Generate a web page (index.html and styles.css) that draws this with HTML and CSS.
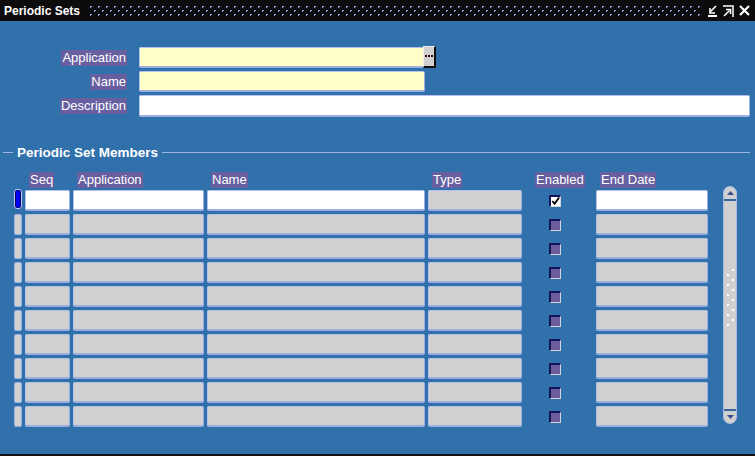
FILE: index.html
```html
<!DOCTYPE html>
<html lang="en">
<head>
  <title>Periodic Sets</title>
  <link rel="stylesheet" href="styles.css">
</head>
<body>
  <div class="window">
    <div class="titlebar">
      <span class="title">Periodic Sets</span>
      <svg class="grip" height="10">
        <defs>
          <pattern id="dots" width="8" height="8" patternUnits="userSpaceOnUse">
            <rect x="0" y="0" width="2" height="1" fill="#8ca2e8"/>
            <rect x="0" y="0" width="1" height="2" fill="#8ca2e8"/>
            <rect x="4" y="4" width="2" height="1" fill="#8ca2e8"/>
            <rect x="4" y="4" width="1" height="2" fill="#8ca2e8"/>
          </pattern>
        </defs>
        <rect width="100%" height="10" fill="url(#dots)"/>
      </svg>
      <div class="controls">
        <svg width="10" height="12" viewBox="0 0 10 12">
          <path d="M8 1 L2.5 6.5" stroke="#fff" stroke-width="1.6" fill="none"/>
          <path d="M2 3 V8 H7" stroke="#fff" stroke-width="1.6" fill="none"/>
          <rect x="0" y="10" width="9" height="2" fill="#fff"/>
        </svg>
        <svg width="11" height="12" viewBox="0 0 11 12">
          <path d="M0 1 H10 V12" stroke="#fff" stroke-width="1.5" fill="none"/>
          <path d="M1 11 L6.5 5.5" stroke="#fff" stroke-width="1.6" fill="none"/>
          <path d="M3 4.5 H7.5 V9" stroke="#fff" stroke-width="1.6" fill="none"/>
        </svg>
        <svg width="11" height="11" viewBox="0 0 11 11">
          <path d="M1 1 L10 10 M10 1 L1 10" stroke="#fff" stroke-width="2.2" fill="none"/>
        </svg>
      </div>
    </div>

    <div class="content">
      <div class="form">
        <div class="lbl"><span>Application</span></div>
        <div class="field-line">
          <div class="fld yellow app"></div>
          <div class="lov">
            <svg width="8" height="2" viewBox="0 0 8 2">
              <rect x="0" y="0" width="2" height="2" fill="#3a0000"/>
              <rect x="3" y="0" width="2" height="2" fill="#3a0000"/>
              <rect x="6" y="0" width="2" height="2" fill="#3a0000"/>
            </svg>
          </div>
        </div>
        <div class="lbl"><span>Name</span></div>
        <div class="field-line">
          <div class="fld yellow name"></div>
        </div>
        <div class="lbl"><span>Description</span></div>
        <div class="field-line">
          <div class="fld white desc"></div>
        </div>
      </div>

      <div class="legend">
        <span class="rule short"></span>
        <span class="legend-text">Periodic Set Members</span>
        <span class="rule"></span>
      </div>

      <div class="members">
        <div class="table">
          <div class="row head">
            <div></div>
            <div class="hd"><span>Seq</span></div>
            <div class="hd"><span>Application</span></div>
            <div class="hd"><span>Name</span></div>
            <div class="hd"><span>Type</span></div>
            <div class="hd en"><span>Enabled</span></div>
            <div class="hd"><span>End Date</span></div>
          </div>

          <div class="row">
            <div class="ind cur"></div>
            <div class="fld white"></div>
            <div class="fld white"></div>
            <div class="fld white"></div>
            <div class="fld"></div>
            <div class="cb-cell">
              <div class="cb checked">
                <svg width="10" height="10" viewBox="0 0 10 10">
                  <path d="M1.5 5 L4 8 L9 1" stroke="#000" stroke-width="2" fill="none"/>
                </svg>
              </div>
            </div>
            <div class="fld white"></div>
          </div>

          <div class="row">
            <div class="ind"></div><div class="fld"></div><div class="fld"></div><div class="fld"></div><div class="fld"></div>
            <div class="cb-cell"><div class="cb"></div></div><div class="fld"></div>
          </div>
          <div class="row">
            <div class="ind"></div><div class="fld"></div><div class="fld"></div><div class="fld"></div><div class="fld"></div>
            <div class="cb-cell"><div class="cb"></div></div><div class="fld"></div>
          </div>
          <div class="row">
            <div class="ind"></div><div class="fld"></div><div class="fld"></div><div class="fld"></div><div class="fld"></div>
            <div class="cb-cell"><div class="cb"></div></div><div class="fld"></div>
          </div>
          <div class="row">
            <div class="ind"></div><div class="fld"></div><div class="fld"></div><div class="fld"></div><div class="fld"></div>
            <div class="cb-cell"><div class="cb"></div></div><div class="fld"></div>
          </div>
          <div class="row">
            <div class="ind"></div><div class="fld"></div><div class="fld"></div><div class="fld"></div><div class="fld"></div>
            <div class="cb-cell"><div class="cb"></div></div><div class="fld"></div>
          </div>
          <div class="row">
            <div class="ind"></div><div class="fld"></div><div class="fld"></div><div class="fld"></div><div class="fld"></div>
            <div class="cb-cell"><div class="cb"></div></div><div class="fld"></div>
          </div>
          <div class="row">
            <div class="ind"></div><div class="fld"></div><div class="fld"></div><div class="fld"></div><div class="fld"></div>
            <div class="cb-cell"><div class="cb"></div></div><div class="fld"></div>
          </div>
          <div class="row">
            <div class="ind"></div><div class="fld"></div><div class="fld"></div><div class="fld"></div><div class="fld"></div>
            <div class="cb-cell"><div class="cb"></div></div><div class="fld"></div>
          </div>
          <div class="row">
            <div class="ind"></div><div class="fld"></div><div class="fld"></div><div class="fld"></div><div class="fld"></div>
            <div class="cb-cell"><div class="cb"></div></div><div class="fld"></div>
          </div>
        </div>

        <div class="scroll">
          <div class="cap top">
            <svg width="7" height="4" viewBox="0 0 7 4"><path d="M0 4 L3.5 0 L7 4 Z" fill="#3c4c8c"/></svg>
          </div>
          <div class="track">
            <svg width="8" height="58">
              <defs>
                <pattern id="grip" width="8" height="10" patternUnits="userSpaceOnUse">
                  <rect x="5" y="0" width="2" height="2" fill="#fff"/>
                  <rect x="0" y="5" width="2" height="2" fill="#fff"/>
                </pattern>
              </defs>
              <rect width="8" height="58" fill="url(#grip)"/>
            </svg>
          </div>
          <div class="cap bottom">
            <svg width="7" height="4" viewBox="0 0 7 4"><path d="M0 0 L3.5 4 L7 0 Z" fill="#3c4c8c"/></svg>
          </div>
        </div>
      </div>
    </div>
  </div>
</body>
</html>
```

FILE: styles.css
```css
* {
  box-sizing: border-box;
}

body {
  margin: 0;
  font-family: "Liberation Sans", Arial, sans-serif;
  background: #3071ab;
}

.window {
  width: 755px;
  height: 456px;
  background: #3071ab;
  border-bottom: 2px solid #141414;
  display: flex;
  flex-direction: column;
  overflow: hidden;
}

.titlebar {
  height: 21px;
  flex-shrink: 0;
  background: #0c0c0c;
  color: #fff;
  display: flex;
  align-items: center;
  padding: 0 5px 0 4px;
}

.title {
  font-weight: bold;
  font-size: 12px;
}

.grip {
  flex: 1;
  margin: 1px 8px 0 10px;
}

.controls {
  display: flex;
  align-items: center;
  gap: 5px;
}

.controls svg {
  display: block;
}

.content {
  padding-top: 26px;
}

/* header form */
.form {
  display: grid;
  grid-template-columns: 127px 1fr;
  column-gap: 12px;
  row-gap: 3px;
  padding-right: 5px;
}

.lbl {
  text-align: right;
  display: flex;
  align-items: center;
  justify-content: flex-end;
}

.lbl span,
.hd span {
  background: #675f9f;
  color: #fff;
  font-size: 13px;
  line-height: 16px;
  padding: 0 1px;
}

.field-line {
  display: flex;
  align-items: flex-start;
  height: 21px;
}

.fld {
  height: 21px;
  background: #d0d0d0;
  border-style: solid;
  border-width: 1px 1px 2px 1px;
  border-color: #b6c2ec #9cade2 #9cade2 #b6c2ec;
  border-radius: 2px;
}

.fld.white {
  background: #fff;
}

.fld.yellow {
  background: #ffffc8;
}

.fld.app {
  width: 285px;
}

.fld.name {
  width: 286px;
}

.fld.desc {
  flex: 1;
  height: 22px;
}

.lov {
  width: 13px;
  height: 22px;
  margin: -1px 0 0 -1px;
  background: #d0d0d0;
  border-style: solid;
  border-width: 1px 2px 2px 1px;
  border-color: #f0f0f0 #101010 #101010 #f0f0f0;
  display: flex;
  align-items: center;
  justify-content: center;
  padding-bottom: 2px;
}

.lov svg {
  display: block;
}

/* section title */
.legend {
  display: flex;
  align-items: center;
  margin-top: 28px;
  padding: 0 5px 0 3px;
  height: 16px;
}

.rule {
  flex: 1;
  height: 1px;
  background: #9fb3e6;
}

.rule.short {
  flex: none;
  width: 10px;
}

.legend-text {
  color: #fff;
  font-weight: bold;
  font-size: 13.5px;
  padding: 0 4px;
}

/* multi-row block */
.members {
  display: flex;
  align-items: flex-start;
  padding-left: 14px;
  margin-top: 12px;
}

.table {
  display: flex;
  flex-direction: column;
  gap: 3px;
}

.row {
  display: grid;
  grid-template-columns: 8px 45px 131px 218px 94px 68px 112px;
  column-gap: 3px;
  height: 21px;
}

.row.head {
  height: 16px;
  margin-bottom: -1px;
}

.hd {
  padding-left: 4px;
  display: flex;
  align-items: center;
}

.hd.en {
  padding-left: 10px;
}

.ind {
  background: #d0d0d0;
  border: 1px solid #9cade2;
  border-radius: 2px;
}

.ind.cur {
  background: #0000f0;
  border-color: #c0c8f0;
  box-shadow: inset 0 0 0 1px #000070;
  border-radius: 3px;
  margin-top: -1px;
  height: 20px;
}

.cb-cell {
  display: flex;
  align-items: center;
  padding-left: 24px;
}

.cb {
  width: 12px;
  height: 12px;
  background: #6a5c9c;
  border-style: solid;
  border-width: 2px 1px 1px 2px;
  border-color: #14145a #d4d4dc #d4d4dc #14145a;
}

.cb.checked {
  background: #fff;
  display: flex;
  align-items: center;
  justify-content: center;
}

.cb.checked svg {
  display: block;
}

/* scrollbar */
.scroll {
  width: 14px;
  height: 238px;
  margin: 14px 0 0 15px;
  background: #d0d0d0;
  border: 1px solid #aebae6;
  border-radius: 7px;
  display: flex;
  flex-direction: column;
}

.cap {
  height: 14px;
  display: flex;
  align-items: center;
  justify-content: center;
}

.cap svg,
.track svg {
  display: block;
}

.cap.top {
  border-bottom: 2px solid #3a66a0;
}

.cap.bottom {
  border-top: 2px solid #3a66a0;
}

.track {
  flex: 1;
  display: flex;
  justify-content: center;
  padding: 68px 0 0 1px;
}
```
